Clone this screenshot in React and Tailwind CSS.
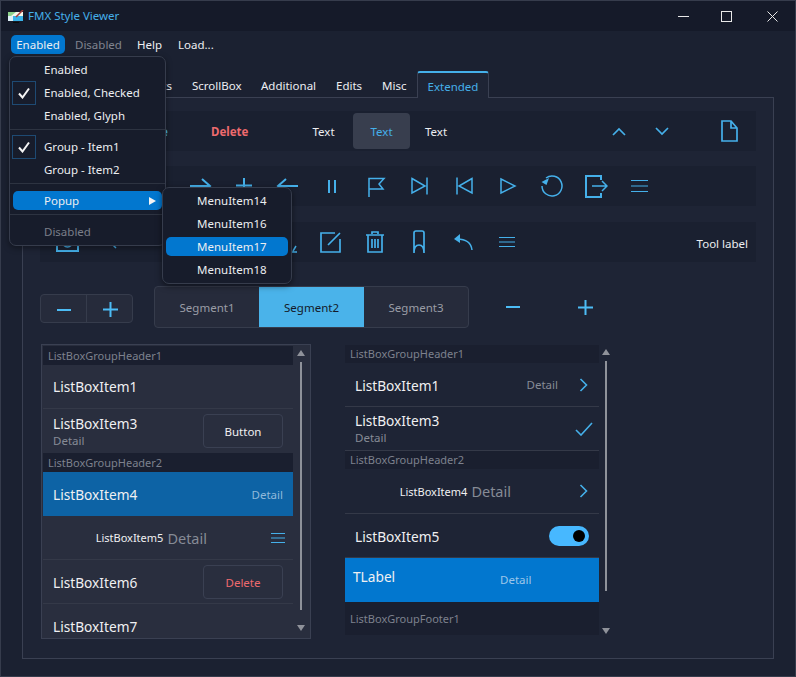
const blue = '#45b0ea'

function Ico({ w = 24, h = 24, sw = 2, children }) {
  return (
    <svg width={w} height={h} viewBox={`0 0 ${w} ${h}`} fill="none" stroke={blue} strokeWidth={sw}>
      {children}
    </svg>
  )
}

function MenuLines({ w = 16 }) {
  return (
    <Ico w={w} h={12} sw={1}>
      <path d={`M0 1.5h${w}M0 6h${w}M0 10.5h${w}`} />
    </Ico>
  )
}

function Chevron() {
  return (
    <Ico w={9} h={14} sw={1.6}>
      <path d="M1.5 1l6 6-6 6" />
    </Ico>
  )
}

function Triangle({ down }) {
  return (
    <svg width="8" height="6" viewBox="0 0 8 6" className="shrink-0">
      <path d={down ? 'M0 0h8L4 6z' : 'M4 0l4 6H0z'} fill="#8f929a" />
    </svg>
  )
}

const toolbar2 = [
  <path key="a" d="M2 12h20M14 5l8 7-8 7" />,
  <path key="b" d="M12 4v16M4 11.5h16" />,
  <path key="c" d="M22 12H2M10 5l-8 7 8 7" />,
  <path key="d" d="M9 6v13M15 6v13" />,
  <path key="e" d="M5 23V4.5h15L15 10l4 5H5" strokeWidth="1.5" />,
  <path key="f" d="M4 4.5l13 7.5-13 7zM19 3.5v17" strokeWidth="1.5" />,
  <path key="g" d="M20 4.5L7 12l13 7zM5 3.5v17" strokeWidth="1.5" />,
  <path key="h" d="M5 5l14 7-14 7z" strokeWidth="1.5" />,
  <g key="i" strokeWidth="1.5"><path d="M6 4A10 10 0 1 1 2 12" /><path d="M9 4l-2.5 7L1.5 8z" fill={blue} stroke="none" /></g>,
  <g key="j" strokeWidth="1.5"><path d="M17 6V2H2v21h15v-4" strokeWidth="2" /><path d="M8 12h15M18 7l5 5-5 5" /></g>,
  <path key="k" d="M3 6.5h17M3 12h17M3 17.5h17" strokeWidth="1" />,
]

const toolbar3 = [
  <g key="a"><path d="M2 6h21v15H2z" /><circle cx="12.5" cy="12" r="5" strokeWidth="1.5" /></g>,
  <path key="b" d="M17 18L7 8" strokeWidth="1.5" />,
  <path key="c" d="M7 12v4" strokeWidth="1.5" />,
]

function TopBar() {
  return (
    <div className="h-[30px] bg-[#151a29] flex items-center shrink-0">
      <svg width="16" height="14" viewBox="0 0 16 14" className="ml-[7px] mt-[1px]">
        <rect x="0" y="2" width="15" height="4" fill="#f4f7ea" />
        <path d="M0 2h8L3 6H0z" fill="#8ed08a" />
        <rect x="0" y="6" width="15" height="5" fill="#39b2e8" />
        <rect x="0" y="6" width="5" height="5" fill="#dff0f7" />
        <path d="M8 7l7-7" stroke="#a33a3a" strokeWidth="1.5" />
        <rect x="5" y="12" width="6" height="1" fill="#0a0a0a" />
      </svg>
      <span className="ml-[4px] text-[11.5px] text-[#45b0ea]">FMX Style Viewer</span>
      <div className="ml-auto flex items-center">
        <div className="w-[46px] pl-[6px] flex justify-center">
          <svg width="11" height="1"><path d="M0 .5h11" stroke="#e8e8e8" /></svg>
        </div>
        <div className="w-[46px] flex justify-center">
          <svg width="11" height="11"><rect x=".5" y=".5" width="10" height="10" fill="none" stroke="#e8e8e8" /></svg>
        </div>
        <div className="w-[46px] flex justify-center">
          <svg width="11" height="11"><path d="M.5.5l10 10M10.5.5l-10 10" stroke="#e8e8e8" /></svg>
        </div>
      </div>
    </div>
  )
}

function MenuBar() {
  return (
    <div className="pl-[10px] pt-[4px] flex items-center text-[11.5px] text-[#eceef1] shrink-0">
      <div className="w-[54px] h-[19px] bg-[#0277cf] rounded-[5px] flex items-center justify-center">Enabled</div>
      <div className="w-[62px] pl-[10px] text-[#80848f]">Disabled</div>
      <div className="w-[41px] pl-[10px]">Help</div>
      <div className="pl-[10px]">Load...</div>
    </div>
  )
}

function Tabs() {
  return (
    <div className="h-[27px] mt-[16px] pl-[22px] flex items-end text-[11.5px] text-[#eceef1] shrink-0">
      <div className="w-[149px] h-[26px] pt-[4px] flex items-center justify-end">Lists</div>
      <div className="ml-[20px] w-[49px] h-[26px] pt-[4px] flex items-center">ScrollBox</div>
      <div className="ml-[20px] w-[55px] h-[26px] pt-[4px] flex items-center">Additional</div>
      <div className="ml-[20px] w-[26px] h-[26px] pt-[4px] flex items-center">Edits</div>
      <div className="ml-[20px] w-[26px] h-[26px] pt-[4px] flex items-center">Misc</div>
      <div className="ml-[9px] w-[72px] h-[27px] relative z-10 -mb-px pt-[2px] bg-[#1e2435] border-x border-[#3a4052] border-t-2 border-t-[#45b0ea] rounded-t-[3px] flex items-center justify-center text-[#45b0ea]">
        Extended
      </div>
    </div>
  )
}

function ToolbarOne() {
  return (
    <div className="w-[716px] h-[40px] bg-[#1a2030] flex items-center text-[11.5px] text-[#eceef1]">
      <div className="w-[128px] pt-[2px] text-right font-bold text-[#45b0ea]">Save</div>
      <div className="ml-[43px] w-[36px] pt-[2px] text-center font-bold whitespace-nowrap text-[#ee6a6e]">Delete</div>
      <div className="ml-[48px] w-[57px] pt-[2px] text-center">Text</div>
      <div className="ml-[1px] w-[57px] h-[36px] pt-[2px] rounded-[4px] bg-[#383e4e] flex items-center justify-center text-[#45b0ea]">Text</div>
      <div className="w-[52px] pt-[2px] text-center">Text</div>
      <div className="ml-[135px] w-[43px] flex justify-center">
        <Ico w={14} h={9} sw={1.7}><path d="M1 8l6-6 6 6" /></Ico>
      </div>
      <div className="w-[43px] flex justify-center">
        <Ico w={14} h={9} sw={1.7}><path d="M1 1l6 6 6-6" /></Ico>
      </div>
      <div className="ml-[37px] w-[18px] flex justify-center">
        <Ico w={17} h={22} sw={1.7}>
          <path d="M1 1h9l6 7v13H1zM10 1v7h6" />
        </Ico>
      </div>
    </div>
  )
}

function ToolbarTwo() {
  return (
    <div className="mt-[15px] w-[716px] h-[40px] bg-[#1a2030] flex items-center pl-[138px]">
      {toolbar2.map((icon, i) => (
        <div key={i} className="w-[44px] flex justify-center">
          <Ico>{icon}</Ico>
        </div>
      ))}
    </div>
  )
}

function ToolbarThree() {
  return (
    <div className="mt-[16px] w-[716px] h-[40px] bg-[#1a2030] flex items-center pl-[5px] text-[11.5px] text-[#eceef1]">
      {toolbar3.map((icon, i) => (
        <div key={i} className="w-[44px] flex justify-center">
          <Ico>{icon}</Ico>
        </div>
      ))}
      <div className="ml-[88px] w-[44px] flex justify-center">
        <Ico><path d="M17 22h5M21 16l-3 5" strokeWidth="1.5" /></Ico>
      </div>
      <div className="w-[44px] flex justify-center">
        <Ico w={22} h={22} sw={1.7}>
          <path d="M15 2H1v19h19V8M20 2L8 14" />
        </Ico>
      </div>
      <div className="w-[44px] flex justify-center">
        <Ico w={20} h={22} sw={1.7}>
          <path d="M1 4h18M7 3V1h6v2M3 4v17h14V4M7 8v9M10 8v9M13 8v9" />
        </Ico>
      </div>
      <div className="w-[44px] flex justify-center">
        <Ico w={14} h={24} sw={1.7}>
          <path d="M2 23V3q0-2 2-2h6q2 0 2 2v20q0-8-5-8t-5 8z" />
        </Ico>
      </div>
      <div className="w-[44px] flex justify-center">
        <Ico w={20} h={18} sw={1.5}>
          <path d="M19 17C18 9 13 6 4 6" /><path d="M1 6l6-5v9z" fill={blue} stroke="none" />
        </Ico>
      </div>
      <div className="w-[44px] flex justify-center"><MenuLines /></div>
      <div className="ml-auto mr-[8px] pt-[3px]">Tool label</div>
    </div>
  )
}

function Controls() {
  return (
    <div className="mt-[24px] h-[42px] flex items-center text-[11.5px]">
      <div className="w-[93px] h-[29px] mt-[3px] rounded-[4px] border border-[#363c4c] bg-[#262b3b] flex">
        <div className="w-[46px] pt-[2px] border-r border-[#363c4c] flex items-center justify-center">
          <svg width="14" height="2"><path d="M0 1h14" stroke="#4cbcf5" strokeWidth="2" /></svg>
        </div>
        <div className="flex-1 pt-[2px] pl-[1px] flex items-center justify-center">
          <svg width="15" height="15"><path d="M0 7.5h15M7.5 0v15" stroke="#4cbcf5" strokeWidth="2" /></svg>
        </div>
      </div>
      <div className="ml-[21px] w-[315px] h-[42px] rounded-[4px] border border-[#363c4c] bg-[#262b3b] flex overflow-hidden text-[#9a9da6]">
        <div className="w-[104px] pt-[2px] flex items-center justify-center">Segment1</div>
        <div className="w-[105px] pt-[2px] bg-[#4ab3ea] flex items-center justify-center text-[#141a29]">Segment2</div>
        <div className="flex-1 pt-[2px] flex items-center justify-center">Segment3</div>
      </div>
      <div className="ml-[37px] w-[14px] flex">
        <svg width="14" height="2"><path d="M0 1h14" stroke="#4cbcf5" strokeWidth="2" /></svg>
      </div>
      <div className="ml-[58px] w-[15px] flex">
        <svg width="15" height="15"><path d="M0 7.5h15M7.5 0v15" stroke="#4cbcf5" strokeWidth="2" /></svg>
      </div>
    </div>
  )
}

function ListGroupHeader({ children, h = 'h-[19px]' }) {
  return (
    <div className={`${h} pl-[5px] pt-[1px] flex items-center text-[11px] text-[#7d818d] bg-[#1a1f2f]`}>
      {children}
    </div>
  )
}

function LeftList() {
  const row = 'h-[44px] border-b border-[#343948] flex items-center px-[10px]'
  return (
    <div className="ml-px w-[270px] h-[295px] border border-[#3a4052] bg-[#292e3e] p-px flex text-[#f0f0f2] overflow-hidden">
      <div className="w-[250px]">
        <ListGroupHeader>ListBoxGroupHeader1</ListGroupHeader>
        <div className={`${row} pt-[2px] text-[13.7px]`}>ListBoxItem1</div>
        <div className={`${row} border-b-0 justify-between`}>
          <div>
            <div className="text-[13.7px] leading-[19px]">ListBoxItem3</div>
            <div className="text-[11.5px] leading-[16px] text-[#868b96]">Detail</div>
          </div>
          <div className="w-[80px] h-[34px] pt-[2px] rounded-[4px] border border-[#3a4052] flex items-center justify-center text-[11.5px]">Button</div>
        </div>
        <ListGroupHeader>ListBoxGroupHeader2</ListGroupHeader>
        <div className="h-[44px] pt-[2px] bg-[#0d63a5] flex items-center justify-between px-[10px]">
          <span className="text-[13.7px]">ListBoxItem4</span>
          <span className="text-[11.5px] text-[#8fb9da]">Detail</span>
        </div>
        <div className={`${row} justify-end`}>
          <span className="text-[11px] pt-[2px] mr-[4px]">ListBoxItem5</span>
          <span className="text-[14.5px] pt-[2px] text-[#868b96]">Detail</span>
          <div className="ml-[64px] mr-[-2px] flex"><MenuLines w={14} /></div>
        </div>
        <div className={`${row} justify-between`}>
          <span className="text-[13.7px] pt-[3px]">ListBoxItem6</span>
          <div className="w-[80px] h-[34px] pt-[2px] rounded-[4px] border border-[#3a4052] flex items-center justify-center text-[11.5px] text-[#ee6a6e]">Delete</div>
        </div>
        <div className="h-[44px] pt-[2px] flex items-center px-[10px] text-[13.7px]">ListBoxItem7</div>
      </div>
      <div className="flex-1 flex flex-col items-center pt-[4px]">
        <Triangle />
        <div className="mt-[6px] w-[2px] h-[248px] bg-[#8f929a]" />
        <div className="mt-[15px]"><Triangle down /></div>
      </div>
    </div>
  )
}

function RightList() {
  const row = 'h-[44px] border-b border-[#343948] flex items-center pl-[10px]'
  return (
    <div className="ml-[34px] w-[267px] flex text-[#f0f0f2]">
      <div className="w-[254px] mt-px">
        <ListGroupHeader h="h-[18px]">ListBoxGroupHeader1</ListGroupHeader>
        <div className={`${row} justify-between pr-[11px]`}>
          <span className="text-[13.7px] pt-[3px]">ListBoxItem1</span>
          <div className="flex items-center">
            <span className="text-[11.5px] pt-[1px] text-[#868b96] mr-[21px]">Detail</span>
            <Chevron />
          </div>
        </div>
        <div className={`${row} justify-between pr-[6px]`}>
          <div>
            <div className="text-[13.7px] leading-[19px]">ListBoxItem3</div>
            <div className="text-[11.5px] leading-[16px] text-[#868b96]">Detail</div>
          </div>
          <Ico w={18} h={14} sw={1.6}><path d="M1 8l5 5L17 1" /></Ico>
        </div>
        <ListGroupHeader h="h-[18px]">ListBoxGroupHeader2</ListGroupHeader>
        <div className={`${row} h-[45px] justify-end pr-[11px]`}>
          <span className="text-[11px] pt-[2px] mr-[4px]">ListBoxItem4</span>
          <span className="text-[14.5px] pt-[2px] text-[#868b96]">Detail</span>
          <div className="ml-[68px] flex"><Chevron /></div>
        </div>
        <div className={`${row} justify-between pr-[10px]`}>
          <span className="text-[13.7px] pt-[3px]">ListBoxItem5</span>
          <div className="w-[40px] h-[20px] rounded-full bg-[#47b8ff] flex items-center justify-end pr-[4px]">
            <div className="w-[12px] h-[12px] rounded-full bg-black" />
          </div>
        </div>
        <div className="h-[44px] bg-[#0277cf] flex items-center pl-[8px]">
          <span className="w-[147px] pb-[5px] text-[13.7px]">TLabel</span>
          <span className="text-[11.5px] pb-[1px] text-[#9cc6ea]">Detail</span>
        </div>
        <ListGroupHeader h="h-[33px]">ListBoxGroupFooter1</ListGroupHeader>
      </div>
      <div className="flex-1 flex flex-col items-center pt-[5px]">
        <Triangle />
        <div className="mt-[6px] w-[2px] h-[230px] bg-[#8f929a]" />
        <div className="mt-[37px]"><Triangle down /></div>
      </div>
    </div>
  )
}

function CheckBox() {
  return (
    <div className="w-[24px] h-[24px] border border-[#1e4a73] flex items-center justify-center">
      <svg width="12" height="12" viewBox="0 0 12 12"><path d="M1 6.5l3.5 4L11 1.5" fill="none" stroke="#f4f4f4" strokeWidth="2" /></svg>
    </div>
  )
}

function MainMenu() {
  const item = 'h-[23px] flex items-center pl-[34px]'
  const sep = 'h-[8px] pt-[2px]'
  return (
    <div className="absolute left-[8px] top-[55px] w-[157px] h-[190px] rounded-[7px] bg-[#171c2b] border border-[#363c4c] z-20 pt-[1px] text-[11.5px] text-[#eceef1] shadow-[0_2px_6px_rgba(0,0,0,0.4)]">
      <div className={item}>Enabled</div>
      <div className="h-[23px] flex items-center pl-[2px] gap-[8px]"><CheckBox />Enabled, Checked</div>
      <div className={item}>Enabled, Glyph</div>
      <div className={sep}><div className="w-full h-px bg-[#2d3341]" /></div>
      <div className="h-[23px] flex items-center pl-[2px] gap-[8px]"><CheckBox />Group - Item1</div>
      <div className={item}>Group - Item2</div>
      <div className={sep}><div className="w-full h-px bg-[#2d3341]" /></div>
      <div className="h-[23px] flex items-center">
        <div className="ml-[3px] w-[149px] h-[19px] rounded-[5px] bg-[#0277cf] flex items-center pl-[31px] pr-[6px] justify-between">
          Popup
          <svg width="7" height="8"><path d="M0 0l7 4-7 4z" fill="#f4f4f4" /></svg>
        </div>
      </div>
      <div className={sep}><div className="w-full h-px bg-[#2d3341]" /></div>
      <div className={`${item} text-[#7a7e89]`}>Disabled</div>
    </div>
  )
}

function SubMenu() {
  const item = 'h-[23px] flex items-center pl-[34px]'
  return (
    <div className="absolute left-[161px] top-[186px] w-[130px] h-[97px] rounded-[7px] bg-[#171c2b] border border-[#363c4c] z-30 pt-[1px] text-[11.5px] text-[#eceef1] shadow-[0_2px_6px_rgba(0,0,0,0.5)]">
      <div className={item}>MenuItem14</div>
      <div className={item}>MenuItem16</div>
      <div className="h-[23px] flex items-center">
        <div className="ml-[3px] w-[122px] h-[19px] rounded-[5px] bg-[#0277cf] flex items-center pl-[31px]">MenuItem17</div>
      </div>
      <div className={item}>MenuItem18</div>
    </div>
  )
}

export default function App() {
  return (
    <div className="relative w-[796px] h-[677px] overflow-hidden bg-[#1b2131] border border-[#363c4c] flex flex-col font-['Noto_Sans',sans-serif]">
      <TopBar />
      <MenuBar />
      <Tabs />
      <div className="ml-[21px] w-[752px] h-[562px] bg-[#1e2435] border border-[#3a4052] pl-[17px] pt-[13px]">
        <ToolbarOne />
        <ToolbarTwo />
        <ToolbarThree />
        <Controls />
        <div className="mt-[16px] flex items-start">
          <LeftList />
          <RightList />
        </div>
      </div>
      <MainMenu />
      <SubMenu />
    </div>
  )
}
